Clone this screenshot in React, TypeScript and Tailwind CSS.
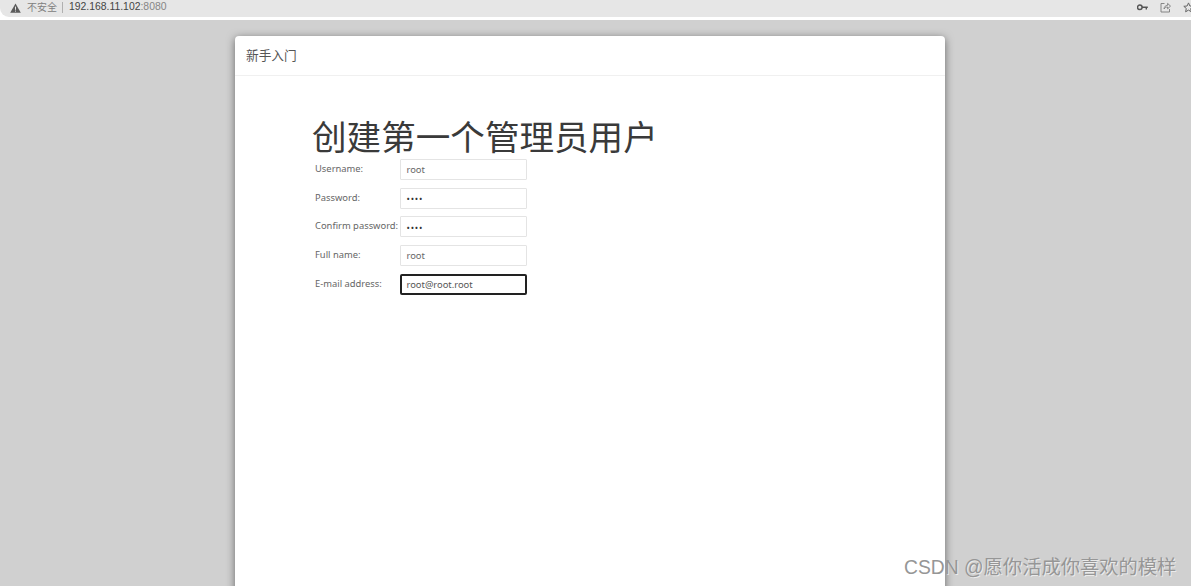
import React from 'react'

const cjk = "font-['Liberation_Sans','Noto_Sans_CJK_SC',sans-serif]"

const fields = [
    { label: 'Username:', value: 'root', type: 'text' },
    { label: 'Password:', value: '••••', type: 'dots' },
    { label: 'Confirm password:', value: '••••', type: 'dots' },
    { label: 'Full name:', value: 'root', type: 'text' },
    { label: 'E-mail address:', value: 'root@root.root', type: 'focus' },
]

const AddressBar: React.FC = () => {
    return (
        <div className="h-[20px] overflow-hidden bg-white">
            <div className="flex h-[17px] items-center justify-between rounded-bl-[9px] bg-[#e6e6e6] pb-[2px] pl-[10px]">
                <div className="flex items-center">
                    <svg width="11" height="10" viewBox="0 0 11 10" className="mr-[6px]">
                        <path d="M5.5 0.5 L10.8 9.8 L0.2 9.8 Z" fill="#5a5a5a" />
                        <rect x="5" y="3.6" width="1" height="3.2" fill="#e6e6e6" />
                        <rect x="5" y="7.6" width="1" height="1" fill="#e6e6e6" />
                    </svg>
                    <span className="text-[10px] leading-none text-[#808080]">不安全</span>
                    <span className="mx-[5px] h-[11px] w-px bg-[#b0b0b0]" />
                    <span className="ml-[1px] text-[10.4px] leading-none text-[#444]">
                        192.168.11.102<span className="text-[#858585]">:8080</span>
                    </span>
                </div>
                <div className="-mr-[3px] flex items-center gap-[12px]">
                    <svg width="11" height="7" viewBox="0 0 11 7">
                        <circle cx="2.8" cy="3.3" r="2.3" fill="none" stroke="#555" strokeWidth="1.5" />
                        <path d="M5 2.6 H10.8 V4 H10 V5.4 H8.6 V4 H5 Z" fill="#555" />
                    </svg>
                    <svg width="11" height="11" viewBox="0 0 11 11" fill="none" stroke="#7a7a7a" strokeWidth="0.9">
                        <path d="M4.5 1.5 H1 V10 H9.5 V7" />
                        <path d="M4 7 C4.2 4.6 5.6 3.4 7.6 3.3 V1.4 L10.5 4.1 L7.6 6.8 V5 C6 5 5 5.6 4 7 Z" />
                    </svg>
                    <svg width="11" height="11" viewBox="0 0 11 11" fill="none" stroke="#666" strokeWidth="1">
                        <path d="M5.5 0.9 L6.9 4 L10.2 4.3 L7.7 6.5 L8.4 9.8 L5.5 8.1 L2.6 9.8 L3.3 6.5 L0.8 4.3 L4.1 4 Z" />
                    </svg>
                </div>
            </div>
        </div>
    )
}

const App: React.FC = () => {
    return (
        <div className={`relative h-[586px] w-[1191px] overflow-hidden bg-[#d0d0d0] ${cjk}`}>
            <AddressBar />
            <div className="ml-[235px] mt-[16px] h-[560px] w-[710px] rounded-t-[4px] bg-white shadow-[0_2px_8px_rgba(0,0,0,0.5)]">
                <div className="flex h-[40px] items-center border-b border-[#f0f0f0] pl-[11px] pt-[2px] text-[12.7px] text-[#555]">
                    新手入门
                </div>
                <div className="pl-[77px] pt-[40px]">
                    <h1 className="h-[43px] text-[34.6px] leading-[44px] font-normal text-[#3a3a3a]">创建第一个管理员用户</h1>
                    <div className="flex flex-col gap-[8.7px] pl-[3px] font-['Noto_Sans','Liberation_Sans',sans-serif]">
                        {fields.map((f) => (
                            <div key={f.label} className="flex h-[20px] items-start">
                                <label className="w-[85px] pt-[3px] text-[9.4px] leading-[13px] whitespace-nowrap text-[#666]">{f.label}</label>
                                <div
                                    className={
                                        f.type === 'focus'
                                            ? 'flex h-[21px] w-[127px] items-center rounded-[2px] border-2 border-[#222] pl-[4.5px] pt-[1px] text-[9.4px] text-[#555]'
                                            : 'flex h-[21px] w-[127px] items-center rounded-[1px] border border-[#e4e4e4] pl-[5.5px] pt-[1px] text-[9.4px] text-[#666]'
                                    }
                                >
                                    {f.type === 'dots' ? <span className="text-[9px] tracking-[0.8px] text-[#333]">{f.value}</span> : f.value}
                                </div>
                            </div>
                        ))}
                    </div>
                </div>
            </div>
            <div className="absolute left-[904px] top-[556px] text-[19.3px] leading-[24px] whitespace-nowrap text-[#969696] [text-shadow:1px_1px_0_rgba(255,255,255,0.6)]">
                CSDN @愿你活成你喜欢的模样
            </div>
        </div>
    )
}

export default App
